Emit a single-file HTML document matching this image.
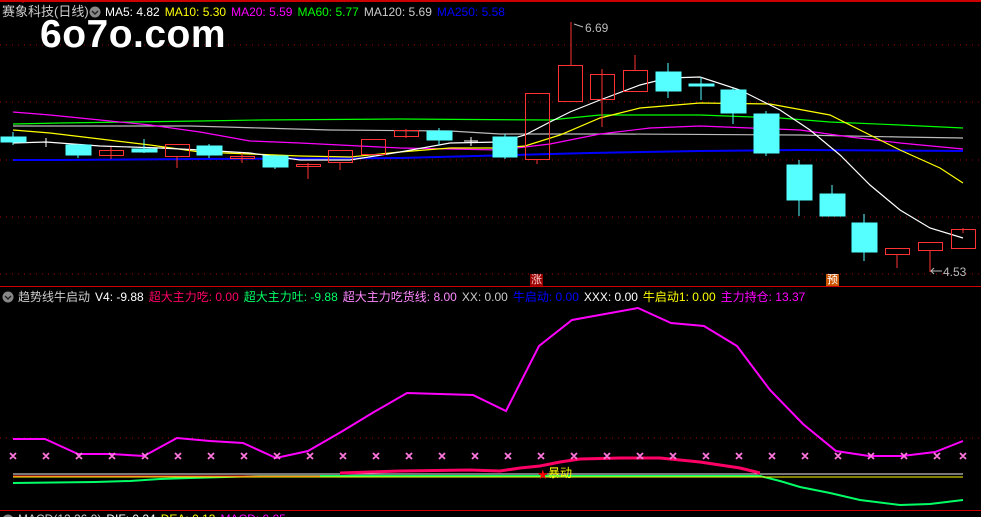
<!DOCTYPE html>
<html><head><meta charset="utf-8"><style>
html,body{margin:0;padding:0;background:#000;width:981px;height:517px;overflow:hidden;position:relative}
.t{position:absolute;font-family:"Liberation Sans","Noto Sans CJK SC",sans-serif;font-size:12px;white-space:nowrap;line-height:14px}
.t span{margin-right:5px}
</style></head><body>
<svg width="981" height="517" style="position:absolute;left:0;top:0" shape-rendering="crispEdges">
<line x1="0" y1="1" x2="981" y2="1" stroke="#c00" stroke-width="2"/>
<line x1="23" y1="0" x2="23" y2="3" stroke="#c00"/>
<g stroke="#a00" stroke-dasharray="1,5">
<line x1="0" y1="45" x2="981" y2="45"/><line x1="0" y1="102" x2="981" y2="102"/><line x1="0" y1="160" x2="981" y2="160"/><line x1="0" y1="217" x2="981" y2="217"/><line x1="0" y1="274" x2="981" y2="274"/>
<line x1="0" y1="438" x2="981" y2="438"/>
</g>
<line x1="0" y1="286.5" x2="981" y2="286.5" stroke="#c00"/>
<line x1="0" y1="510.5" x2="981" y2="510.5" stroke="#c00"/>
<g fill="none" stroke-width="1.2" shape-rendering="auto">
<polyline stroke="#00f" stroke-width="2" points="13,160 60,160 200,159 400,158 590,153 700,151 800,150 963,151"/>
<polyline stroke="#bbb" points="13,126 190,126 260,128 330,130 450,131 500,134 620,134 800,135 900,137 963,138"/>
<polyline stroke="#0f0" points="13,124 60,123 130,122 200,121 260,120 400,119 550,120 600,115 700,115 780,118 830,122 900,125 963,128"/>
<polyline stroke="#f0f" points="13,112 50,115 100,120 150,125 200,132 250,141 300,143 400,148 500,150 550,144 600,134 650,128 700,126 750,128 800,130 850,137 900,143 963,149"/>
<polyline stroke="#ff0" points="13,130 50,133 100,139 150,145 200,152 250,154 300,156 350,157 400,152 450,148 500,148 525,146 560,135 600,118 640,108 700,103 770,104 830,115 870,135 900,150 940,168 963,183"/>
<polyline stroke="#fff" points="13,143 46,142 100,146 160,148 200,150 250,153 300,160 350,160 400,152 450,143 500,142 525,135 550,122 570,112 600,100 640,85 668,78 700,77 740,90 780,110 810,130 840,155 870,185 900,210 930,228 963,238"/>
</g>
<g stroke="#5ff" fill="#5ff">
<line x1="13" y1="132" x2="13" y2="145"/><rect x="1" y="137" width="25" height="5"/>
<line x1="78" y1="144" x2="78" y2="158"/><rect x="66" y="145" width="25" height="10"/>
<line x1="144" y1="139" x2="144" y2="153"/><rect x="132" y="149" width="25" height="3"/>
<line x1="209" y1="144" x2="209" y2="158"/><rect x="197" y="146" width="25" height="9"/>
<line x1="275" y1="155" x2="275" y2="169"/><rect x="263" y="156" width="25" height="11"/>
<line x1="439" y1="128" x2="439" y2="145"/><rect x="427" y="131" width="25" height="9"/>
<line x1="505" y1="134" x2="505" y2="159"/><rect x="493" y="137" width="24" height="20"/>
<line x1="668" y1="63" x2="668" y2="98"/><rect x="656" y="72" width="25" height="19"/>
<line x1="701" y1="77" x2="701" y2="100"/><rect x="689" y="84" width="25" height="2"/>
<line x1="733" y1="88" x2="733" y2="124"/><rect x="721" y="90" width="25" height="23"/>
<line x1="766" y1="111" x2="766" y2="156"/><rect x="754" y="114" width="25" height="39"/>
<line x1="799" y1="160" x2="799" y2="216"/><rect x="787" y="165" width="25" height="35"/>
<line x1="832" y1="185" x2="832" y2="216"/><rect x="820" y="194" width="25" height="22"/>
<line x1="864" y1="214" x2="864" y2="261"/><rect x="852" y="223" width="25" height="29"/>
</g>
<g stroke="#fff"><line x1="46" y1="138" x2="46" y2="147"/><line x1="471" y1="137" x2="471" y2="146"/><line x1="464" y1="141" x2="478" y2="141"/></g>
<g stroke="#f33" fill="none">
<line x1="111" y1="147" x2="111" y2="159"/><rect x="99.5" y="150.5" width="24" height="5"/>
<line x1="177" y1="157" x2="177" y2="168"/><rect x="165.5" y="144.5" width="24" height="12"/>
<line x1="242" y1="153" x2="242" y2="163"/><rect x="230.5" y="156.5" width="24" height="2"/>
<line x1="308" y1="163" x2="308" y2="179"/><rect x="296.5" y="164.5" width="24" height="2"/>
<line x1="340" y1="163" x2="340" y2="170"/><rect x="328.5" y="150.5" width="24" height="12"/>
<rect x="361.5" y="139.5" width="24" height="15"/>
<line x1="406" y1="129" x2="406" y2="138"/><rect x="394.5" y="130.5" width="24" height="6"/>
<line x1="537" y1="160" x2="537" y2="164"/><rect x="525.5" y="93.5" width="24" height="66"/>
<line x1="571" y1="22" x2="571" y2="65"/><rect x="558.5" y="65.5" width="24" height="36"/>
<line x1="602" y1="69" x2="602" y2="127"/><rect x="590.5" y="74.5" width="24" height="25"/>
<line x1="635" y1="55" x2="635" y2="70"/><rect x="623.5" y="70.5" width="24" height="21"/>
<line x1="897" y1="254" x2="897" y2="268"/><rect x="885.5" y="248.5" width="24" height="6"/>
<line x1="930" y1="250" x2="930" y2="272"/><rect x="918.5" y="242.5" width="24" height="8"/>
<line x1="963" y1="228" x2="963" y2="233"/><rect x="951.5" y="229.5" width="24" height="19"/>
</g>
<g stroke="#bbb" fill="none" shape-rendering="auto"><polyline points="574,24 583,27"/><polyline points="931,271 942,271"/><polyline points="934,268 931,271 934,274"/></g>
<rect x="530" y="274" width="13" height="12" fill="#900"/>
<rect x="826" y="274" width="13" height="12" fill="#c50"/>
<g fill="none" shape-rendering="auto">
<polyline stroke="#0f6" stroke-width="2" points="13,483 95,482 130,481 160,479 190,478 260,476 320,476 760,476 780,481 800,487 830,493 860,500 900,505 930,504 963,500"/>
<line x1="13" y1="474" x2="963" y2="474" stroke="#eee"/>
<line x1="13" y1="476" x2="320" y2="476" stroke="#f33"/>
<line x1="13" y1="477" x2="963" y2="477" stroke="#ff0"/>
<polyline stroke="#f06" stroke-width="3" points="340,473 370,472 400,471 470,470 500,471 520,468 540,466 560,462 580,459 620,458 660,458 700,462 740,468 760,473"/>
<polyline stroke="#f0f" stroke-width="2" points="13,439 45,439 78,454 111,454 144,456 177,438 210,441 243,443 276,458 308,451 341,432 374,412 407,393 440,394 473,395 506,411 539,346 572,320 605,314 638,308 671,323 704,326 737,346 770,390 803,424 836,451 869,456 902,456 935,452 963,441"/>
</g>
<text x="537" y="479" fill="#f00" font-size="13" font-family="DejaVu Sans">★</text>
</svg>
<svg width="981" height="517" style="position:absolute;left:0;top:0">
<g stroke="#f7d" stroke-width="1.8">
<path d="M10,453l6,6m0,-6l-6,6M43,453l6,6m0,-6l-6,6M76,453l6,6m0,-6l-6,6M109,453l6,6m0,-6l-6,6M142,453l6,6m0,-6l-6,6M175,453l6,6m0,-6l-6,6M208,453l6,6m0,-6l-6,6M241,453l6,6m0,-6l-6,6M274,453l6,6m0,-6l-6,6M307,453l6,6m0,-6l-6,6M340,453l6,6m0,-6l-6,6M373,453l6,6m0,-6l-6,6M406,453l6,6m0,-6l-6,6M439,453l6,6m0,-6l-6,6M472,453l6,6m0,-6l-6,6M505,453l6,6m0,-6l-6,6M538,453l6,6m0,-6l-6,6M571,453l6,6m0,-6l-6,6M604,453l6,6m0,-6l-6,6M637,453l6,6m0,-6l-6,6M670,453l6,6m0,-6l-6,6M703,453l6,6m0,-6l-6,6M736,453l6,6m0,-6l-6,6M769,453l6,6m0,-6l-6,6M802,453l6,6m0,-6l-6,6M835,453l6,6m0,-6l-6,6M868,453l6,6m0,-6l-6,6M901,453l6,6m0,-6l-6,6M934,453l6,6m0,-6l-6,6M960,453l6,6m0,-6l-6,6"/>
</g>
<circle cx="95" cy="12" r="5.5" fill="#888"/><path d="M92,11l3,3l3,-3" stroke="#222" fill="none" stroke-width="1.5"/>
<circle cx="8" cy="297" r="5.5" fill="#888"/><path d="M5,296l3,3l3,-3" stroke="#222" fill="none" stroke-width="1.5"/>
<circle cx="8" cy="520" r="5.5" fill="#888"/>
</svg>
<div class="t" style="left:2px;top:5px;color:#ccc;font-size:13px">赛象科技(日线)</div>
<div class="t" style="left:105px;top:5px"><span style="color:#fff">MA5: 4.82</span><span style="color:#ff0">MA10: 5.30</span><span style="color:#f0f">MA20: 5.59</span><span style="color:#0f0">MA60: 5.77</span><span style="color:#ccc">MA120: 5.69</span><span style="color:#00f">MA250: 5.58</span></div>
<div class="t" style="left:40px;top:15px;color:#fff;font-size:39px;font-weight:bold;line-height:40px;letter-spacing:0.5px">6o7o.com</div>
<div class="t" style="left:585px;top:21px;color:#bbb">6.69</div>
<div class="t" style="left:943px;top:265px;color:#bbb">4.53</div>
<div class="t" style="left:531px;top:273px;color:#fcc;font-size:11px">涨</div>
<div class="t" style="left:827px;top:273px;color:#fff;font-size:11px">预</div>
<div class="t" style="left:18px;top:290px"><span style="color:#ccc">趋势线牛启动</span><span style="color:#fff">V4: -9.88</span><span style="color:#f06">超大主力吃: 0.00</span><span style="color:#0f6">超大主力吐: -9.88</span><span style="color:#f8f">超大主力吃货线: 8.00</span><span style="color:#ccc">XX: 0.00</span><span style="color:#00f">牛启动: 0.00</span><span style="color:#fff">XXX: 0.00</span><span style="color:#ff0">牛启动1: 0.00</span><span style="color:#f0f">主力持仓: 13.37</span></div>
<div class="t" style="left:548px;top:466px;color:#ff0">暴动</div>
<div class="t" style="left:18px;top:512px"><span style="color:#ccc">MACD(12,26,9)</span><span style="color:#fff">DIF: 0.24</span><span style="color:#ff0">DEA: 0.13</span><span style="color:#f0f">MACD: 0.25</span></div>
</body></html>
